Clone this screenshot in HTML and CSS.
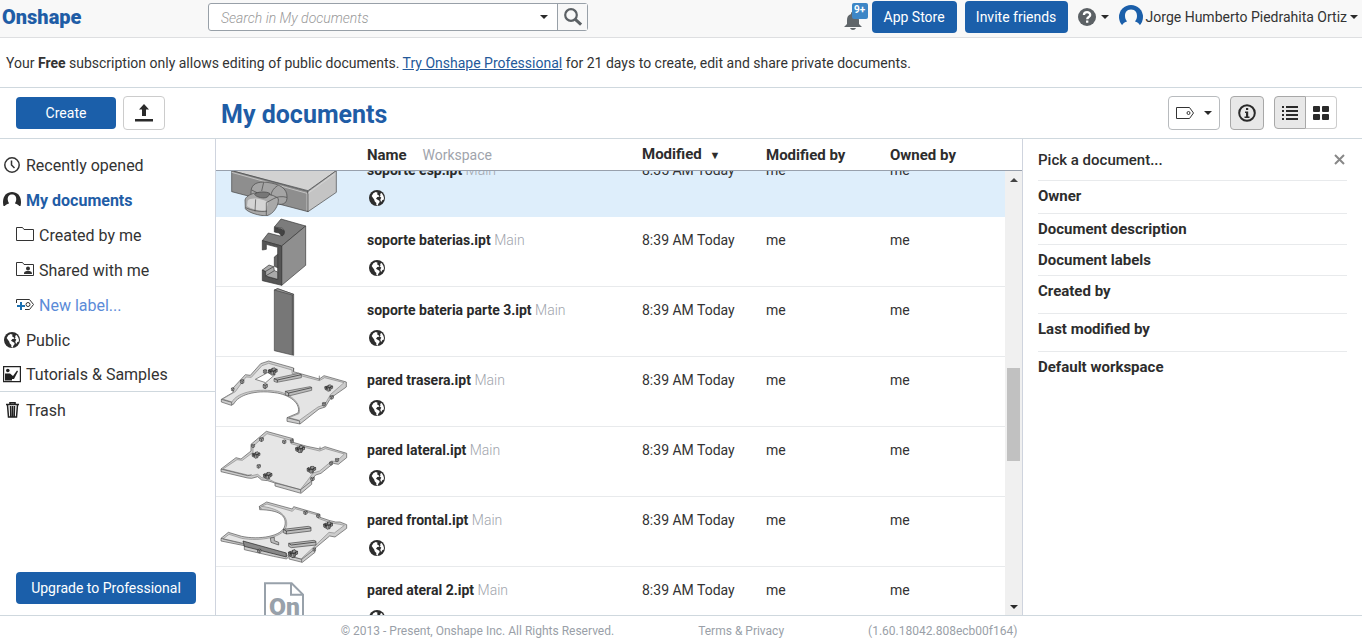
FILE: index.html
```html
<!DOCTYPE html>
<html lang="en">
<head>
<meta charset="utf-8">
<title>My documents - Onshape</title>
<link rel="stylesheet" href="styles.css">
</head>
<body>
<svg class="defs" aria-hidden="true">
  <symbol id="globe" viewBox="0 0 48 48">
    <circle cx="24" cy="24" r="24" fill="#2d2d2d"/>
    <path fill="#fff" d="M8 18l5-8 7-4 6 2-2 5 5 3 2 4-6 1-4 5 5 3 5 3 1 4-4 5-2 6-4-2v-6l-5-5-1-5zM33 12l5-3 5 8 2 7-1 5-4 1-2 5-3-1-1-6 3-5-5-4 3-3z"/>
  </symbol>
  <symbol id="cluster" viewBox="0 0 32 26">
    <path d="M2 9l6-3 3 3 3-6 8-2 3 4 5 1v8l-6 2-2 7-9 2-3-4-7-3z" fill="#999" stroke="#222" stroke-width="2"/>
    <path d="M2 9l9 3v8M11 9l8 3 11-6M14 3v6M19 12v10M8 6v12M24 6v10M4 14l20-3" fill="none" stroke="#222" stroke-width="2"/>
  </symbol>
  <symbol id="cube" viewBox="0 0 16 16">
    <path d="M2 4l6-3 6 2v8l-6 4-6-3zM2 4l6 2 6-3M8 6v9" fill="#aaa" stroke="#333" stroke-width="2"/>
  </symbol>
</svg>

<header class="topbar">
  <a class="logo" href="#">Onshape</a>
  <form class="search">
    <input class="search-input" type="text" placeholder="Search in My documents" aria-label="Search in My documents">
    <button class="search-scope" type="button" aria-label="Search scope"><span class="caret"></span></button>
    <button class="search-go" type="button" aria-label="Search">
      <svg width="20" height="20" viewBox="0 0 20 20" fill="none" stroke="#5c6165"><circle cx="8" cy="8" r="5.8" stroke-width="2.2"/><path d="M12.3 12.3l5.8 5.3" stroke-width="3"/></svg>
    </button>
  </form>
  <div class="account">
    <button class="bell" type="button" aria-label="Notifications">
      <svg width="18" height="19" viewBox="0 0 18 19"><path fill="#60666a" d="M8 1c2 0 2 1 2 2 3 1 5 3 5 6v4l3 3H0l3-3V9c0-3 1-5 4-6 0-1 0-2 1-2zM6 17h6c-1 2.500-5 2.500-6 0z"/></svg>
      <span class="badge">9+</span>
    </button>
    <button class="btn app-store" type="button">App Store</button>
    <button class="btn invite" type="button">Invite friends</button>
    <button class="help" type="button" aria-label="Help">
      <svg width="18" height="18" viewBox="0 0 18 18"><circle cx="9" cy="9" r="9" fill="#5c6165"/><path d="M5.900 7C6 3.200 12.200 3.200 12.200 6.900 12.200 9 9.200 9 9.200 11.200M9.200 12.500v2.200" fill="none" stroke="#fff" stroke-width="2.300"/></svg>
      <span class="caret"></span>
    </button>
    <button class="user" type="button">
      <svg width="24" height="24" viewBox="0 0 24 24"><circle cx="12" cy="12" r="12" fill="#1b5faa"/><path fill="#f8f8f8" d="M12 4.500c4.500 0 6 3 6 6.500 0 2.500-1 4-2 5.500 3 1 5 2.500 5.500 5.500V24h-19v-2c.5-3 2.500-4.500 5.500-5.500-1-1.500-2-3-2-5.500 0-3.500 1.500-6.500 6-6.500z"/></svg>
      <span>Jorge Humberto Piedrahita Ortiz</span>
      <span class="caret"></span>
    </button>
  </div>
</header>

<p class="banner">Your <b>Free</b> subscription only allows editing of public documents. <a href="#">Try Onshape Professional</a> for 21 days to create, edit and share private documents.</p>

<div class="toolbar">
  <div class="create-group">
    <button class="btn create" type="button">Create</button>
    <button class="tool upload" type="button" aria-label="Import">
      <svg width="18" height="18" viewBox="0 0 18 18" fill="#2a2a2a"><path d="M9 0l5 5.500h-3V12H7V5.500H4zM0 15h18v2.500H0z"/></svg>
    </button>
  </div>
  <h1>My documents</h1>
  <div class="view-tools">
    <button class="tool filter" type="button" aria-label="Filter by label">
      <svg width="18" height="12" viewBox="0 0 18 12" fill="none" stroke="#333"><path d="M.5.500h13l4 5.500-4 5.500H.5z"/><circle cx="12.500" cy="6" r="1.500"/></svg>
      <span class="caret"></span>
    </button>
    <button class="tool info pressed" type="button" aria-label="Details">
      <svg width="18" height="18" viewBox="0 0 18 18"><circle cx="9" cy="9" r="7.800" fill="none" stroke="#2a2a2a" stroke-width="2"/><path fill="#2a2a2a" d="M8 4h2.200v2H8zM7 7.500h3.200v5H11.500V14h-5v-1.500H8V9H7z"/></svg>
    </button>
    <div class="segmented">
      <button class="seg pressed" type="button" aria-label="List view">
        <svg width="16" height="14" viewBox="0 0 16 14" fill="#2a2a2a"><path d="M0 0h2v2H0zM0 4h2v2H0zM0 8h2v2H0zM0 12h2v2H0zM4 0h12v2H4zM4 4h12v2H4zM4 8h12v2H4zM4 12h12v2H4z"/></svg>
      </button>
      <button class="seg" type="button" aria-label="Grid view">
        <svg width="16" height="14" viewBox="0 0 16 14" fill="#2a2a2a"><rect width="7" height="6" rx="1"/><rect x="9" width="7" height="6" rx="1"/><rect y="8" width="7" height="6" rx="1"/><rect x="9" y="8" width="7" height="6" rx="1"/></svg>
      </button>
    </div>
  </div>
</div>

<div class="main">
  <nav class="sidebar">
    <a class="nav" href="#"><svg width="18" height="18" viewBox="0 0 18 18" fill="none" stroke="#333"><circle cx="9" cy="8" r="7.200" stroke-width="1.500"/><path d="M8.500 3.500V8l3 3" stroke-width="1.500"/></svg>Recently opened</a>
    <a class="nav current" href="#"><svg width="18" height="18" viewBox="0 0 18 18"><path fill="#2a2a2a" d="M.5 14C-1.500 5 3 0 9 0s10.500 5 8.500 14z"/><path fill="#fff" d="M9 2.500c3.500 0 4.500 2.500 4.200 5.500-.2 2-1.200 2.500-1.200 3.500 2 .5 4 1.500 5 3.500H1c1-2 3-3 5-3.500 0-1-1-1.500-1.200-3.500C4.500 5 5.500 2.500 9 2.500z"/></svg>My documents</a>
    <a class="nav sub" href="#"><svg width="18" height="18" viewBox="0 0 18 18" fill="none" stroke="#333"><path d="M.5 13.500v-13h6l1.500 2h9.500v11z"/></svg>Created by me</a>
    <a class="nav sub" href="#"><svg width="18" height="18" viewBox="0 0 18 18" fill="none" stroke="#333"><path d="M.5 13.500v-13h6l1.500 2h9.500v11z"/><path d="M8 12c0-3 2-3 4-3s4 0 4 3zM12 4.500a2 2 0 1 1 0 4 2 2 0 0 1 0-4z" fill="#333" stroke="none"/></svg>Shared with me</a>
    <a class="nav sub new" href="#"><svg width="18" height="18" viewBox="0 0 18 18" fill="none" stroke="#333"><path d="M.5 6V2.500h13l4 5-4 5H9"/><circle cx="12" cy="7.500" r="2"/><path d="M1 9h8M5 5v8" stroke="#1b6fb0" stroke-width="2"/></svg>New label...</a>
    <a class="nav" href="#"><svg width="18" height="18" viewBox="0 0 18 18"><use href="#globe" x="1" y="0" width="16" height="16"/></svg>Public</a>
    <a class="nav divided" href="#"><svg width="18" height="18" viewBox="0 0 18 18"><path d="M.6.600h16.800v15H.6z" fill="none" stroke="#222" stroke-width="1.200"/><circle cx="4.800" cy="4.500" r="1.800" fill="#222"/><path fill="#222" d="M2 14.500V7.500h5l3 2.500 4-5.500 1 .8L11 13H9v1.500z"/></svg>Tutorials &amp; Samples</a>
    <a class="nav" href="#"><svg width="18" height="18" viewBox="0 0 18 18" fill="none" stroke="#222"><path d="M3 2.500h13M7 2V.800h5V2" stroke-width="1.600"/><path d="M4.500 3l1 12h8l1-12M7.500 4l.3 11M9.500 4v11M11.500 4l-.3 11" stroke-width="1.500"/></svg>Trash</a>
    <button class="btn upgrade" type="button">Upgrade to Professional</button>
  </nav>

  <section class="documents">
    <table class="doc-table head">
      <colgroup><col class="c-thumb"><col class="c-name"><col class="c-mod"><col class="c-by"><col></colgroup>
      <thead><tr><th></th><th>Name <span class="muted workspace">Workspace</span></th><th>Modified <span class="sort">▼</span></th><th>Modified by</th><th>Owned by</th></tr></thead>
    </table>
    <div class="scroller">
      <div class="viewport">
        <table class="doc-table rows">
          <colgroup><col class="c-thumb"><col class="c-name"><col class="c-mod"><col class="c-by"><col></colgroup>
          <tbody>
          <tr class="selected">
            <td class="thumb"><svg width="135" height="69" viewBox="9 21 405 207" stroke="#444" stroke-width="2" stroke-linejoin="round">
              <path d="M50 92l70-60 244 60-85 60z" fill="#d2d2d2"/><path d="M50 92l229 62v61L50 155z" fill="#8e8e8e"/><path d="M279 154l85-62v65l-85 58z" fill="#c4c4c4"/><path d="M50 97l226 63v52M279 160l80-58" fill="none" stroke="#ddd"/>
              <path d="M108 156C108 130 130 124 156 127C196 132 216 146 216 170C217 188 206 196 188 192C182 200 176 206 168 211L108 190Z" fill="#a4a4a4"/>
              <path d="M90 180C92 170 104 164 116 160C138 154 178 164 190 176C192 196 176 222 156 227C134 229 96 216 91 206Z" fill="#a9a9a9"/>
              <path d="M98 182C104 170 150 176 158 188L154 212C136 214 104 206 96 198Z" fill="#d4d4d4" stroke="none"/>
              <path d="M119 163c6-9 36-9 45-3-1 8-8 14-18 14-14-1-24-5-27-11z" fill="#777"/>
              <path d="M110 150l16 8M146 127l-6 26M188 137c-14 8-20 22-20 30M216 172c-16-4-30-2-40 4M154 188c8-4 14-8 22-12M92 203c16 8 46 14 64 10M154 188v38M122 178l-2 36" fill="none"/>
            </svg></td>
            <td><b>soporte esp.ipt</b> <span class="muted">Main</span><svg class="globe"><use href="#globe"/></svg></td><td>8:35 AM Today</td><td>me</td><td>me</td>
          </tr>
          <tr>
            <td class="thumb"><svg width="135" height="69" viewBox="9 231 405 207" stroke="#333" stroke-width="2" stroke-linejoin="round">
              <path d="M178 261l20-24 74 21-72 60-58-16 18-23 35 9c15-8 15-22 4-24z" fill="#7c7c7c"/><path d="M200 318l72-60v118l-72 60z" fill="#8f8f8f"/><path d="M178 262l20 4c13 3 13 17 3 22l-10-9-13-3z" fill="#444"/>
              <path d="M142 302L200 318V436L142 422V390L152 394V408L188 418V322L154 313V328L142 330Z" fill="#555"/>
              <path d="M178 351l10-8v40l-10-4z" fill="#666"/>
              <path d="M142 390L162 375L176 380L178 392L188 396V418L152 408V394Z" fill="#aaa"/><path d="M152 394l24-14M152 408l26-16" fill="none"/>
            </svg></td>
            <td><b>soporte baterias.ipt</b> <span class="muted">Main</span><svg class="globe"><use href="#globe"/></svg></td><td>8:39 AM Today</td><td>me</td><td>me</td>
          </tr>
          <tr>
            <td class="thumb"><svg width="135" height="69" viewBox="9 6 405 207" stroke="#444" stroke-width="2">
              <path d="M178 15l10-4 48 17v183l-58-14z" fill="#777"/><path d="M178 15l10-4 48 17-4 2z" fill="#999"/><path d="M232 30v180" fill="none"/>
            </svg></td>
            <td><b>soporte bateria parte 3.ipt</b> <span class="muted">Main</span><svg class="globe"><use href="#globe"/></svg></td><td>8:39 AM Today</td><td>me</td><td>me</td>
          </tr>
          <tr>
            <td class="thumb"><svg width="135" height="69" viewBox="0 0 405 207" stroke="#555" stroke-width="2" stroke-linejoin="round">
              <path d="M10 127L46 106V92L82 53L97 55L128 20L152 12L227 33L226 44L304 66L318 56L385 75V90L345 118L335 128L322 150L303 156L246 201L207 193V182L240 168C250 140 215 112 170 107C110 98 60 115 48 140L40 145L10 135Z" fill="#ccc"/>
              <path d="M14 126L52 104L84 60L100 61L132 26L152 19L222 39V49L304 71L320 62L378 77L338 112L320 143L300 150L244 190L213 182L243 170C253 140 215 106 170 102C110 94 56 108 42 135Z" fill="#e4e4e4" stroke="#888"/>
              <path d="M10 127l31 9v9M207 182l38 10v9M227 33v11M304 56v14" fill="none"/>
              <path d="M112 67l42-23 18 8-29 25z" fill="#fff"/><path d="M168 65l74-16 8 4v9l-74 14-8-3zM202 103l74-14 5 2v9l-69 17-10-3z" fill="#bbb"/><path d="M168 65l10 4 72-16M202 103l10 5 69-16M178 69v7M212 108v9" fill="none" stroke="#222"/>
              <use href="#cluster" x="148" y="31" width="32" height="25"/><use href="#cluster" x="315" y="82" width="34" height="22"/><use href="#cube" x="65" y="66" width="15" height="16"/><use href="#cube" x="134" y="36" width="14" height="15"/><use href="#cube" x="133" y="75" width="17" height="25"/><use href="#cube" x="311" y="134" width="14" height="15"/><use href="#cube" x="334" y="114" width="14" height="14"/><use href="#cube" x="38" y="90" width="12" height="14"/>
            </svg></td>
            <td><b>pared trasera.ipt</b> <span class="muted">Main</span><svg class="globe"><use href="#globe"/></svg></td><td>8:39 AM Today</td><td>me</td><td>me</td>
          </tr>
          <tr>
            <td class="thumb"><svg width="135" height="69" viewBox="9 6 405 207" stroke="#555" stroke-width="2" stroke-linejoin="round">
              <path d="M18 132L63 98L78 102L108 78V58L154 19L234 41V52L265 61L276 64L315 72L330 65L395 85V98L370 118L355 115L318 145L302 150L290 165V178L258 205L180 183V174L158 167L140 165L128 155L110 160L98 159L18 140Z" fill="#ccc"/>
              <path d="M24 132L66 104L82 106L114 82V64L156 26L228 46V56L268 67L314 78L332 71L388 87L364 110L350 108L314 138L294 144L278 166L256 194L180 172L156 160L140 158L128 148L110 152L98 150Z" fill="#e6e6e6" stroke="#888"/>
              <path d="M18 132l80 20 12-3M180 174l77 20v9M257 194l33-26M234 41v12M315 65v8" fill="none"/>
              <use href="#cluster" x="106" y="79" width="34" height="22"/><use href="#cluster" x="239" y="60" width="32" height="25"/><use href="#cluster" x="272" y="122" width="34" height="24"/><use href="#cluster" x="142" y="140" width="32" height="24"/><use href="#cube" x="132" y="36" width="15" height="15"/><use href="#cube" x="201" y="43" width="14" height="15"/><use href="#cube" x="124" y="117" width="14" height="14"/><use href="#cube" x="108" y="56" width="13" height="13"/><use href="#cube" x="342" y="108" width="13" height="14"/><use href="#cube" x="359" y="98" width="14" height="14"/><use href="#cube" x="284" y="155" width="17" height="14"/><use href="#cube" x="224" y="42" width="12" height="13"/>
            </svg></td>
            <td><b>pared lateral.ipt</b> <span class="muted">Main</span><svg class="globe"><use href="#globe"/></svg></td><td>8:39 AM Today</td><td>me</td><td>me</td>
          </tr>
          <tr>
            <td class="thumb"><svg width="135" height="69" viewBox="9 216 405 207" stroke="#555" stroke-width="2" stroke-linejoin="round">
              <path d="M133 244L155 231L232 252L236 245L315 268V277L345 287L362 291L375 291L395 299V310L360 336L344 333L300 370V382L262 412L222 402V393L215 402L175 394L88 374V362L18 348V340L40 322L80 334C130 345 205 335 210 300C215 270 190 255 134 254Z" fill="#ccc"/>
              <path d="M139 244L156 237L232 259L240 251L310 271V280L345 293L374 298L388 301L358 324L342 322L294 368L258 402L222 392L88 358L24 342L42 328L80 340C135 350 210 338 215 300C218 268 185 249 139 244Z" fill="#e6e6e6" stroke="#888"/>
              <path d="M84 348l130 36v12l-126-32z" fill="#888" stroke="#222"/>
              <path d="M18 340l66 15M133 244l6 8M223 393l37 10v9M260 403l41-32" fill="none"/>
              <path d="M205 313l75-9 8 3v11l-74 9-9-4zM221 355l76-9 6 3v11l-74 8-8-4zM166 339l12-2v10l13 5v8l-23-8z" fill="#bbb" stroke="#444"/><path d="M205 313l9 5 74-9M221 355l8 5 74-9M214 318v9" fill="none" stroke="#222"/>
              <use href="#cluster" x="322" y="289" width="34" height="25"/><use href="#cluster" x="218" y="372" width="32" height="28"/><use href="#cube" x="264" y="256" width="15" height="14"/><use href="#cube" x="126" y="370" width="14" height="16"/><use href="#cube" x="303" y="265" width="13" height="16"/><use href="#cube" x="292" y="366" width="12" height="15"/>
            </svg></td>
            <td><b>pared frontal.ipt</b> <span class="muted">Main</span><svg class="globe"><use href="#globe"/></svg></td><td>8:39 AM Today</td><td>me</td><td>me</td>
          </tr>
          <tr>
            <td class="thumb"><svg width="135" height="69" viewBox="9 426 405 207" fill="none" stroke="#98a1aa" stroke-width="6"><path d="M150 630V475h80l34 34v120M228 475v34h36"/><text class="doc-mark" x="162" y="570">On</text></svg></td>
            <td><b>pared ateral 2.ipt</b> <span class="muted">Main</span><svg class="globe"><use href="#globe"/></svg></td><td>8:39 AM Today</td><td>me</td><td>me</td>
          </tr>
          </tbody>
        </table>
      </div>
      <div class="scrollbar" aria-hidden="true"><span class="caret up"></span><span class="space-above"></span><span class="handle"></span><span class="space-below"></span><span class="caret"></span></div>
    </div>
  </section>

  <aside class="details">
    <div class="detail title"><h2>Pick a document...</h2><button class="close" type="button" aria-label="Close"><svg width="13" height="11" viewBox="0 0 13 11"><path d="M1 1l9 9M10 1l-9 9" stroke="#888" stroke-width="2"/></svg></button></div>
    <div class="detail owner">Owner</div>
    <div class="detail">Document description</div>
    <div class="detail">Document labels</div>
    <div class="detail tall">Created by</div>
    <div class="detail tall">Last modified by</div>
    <div class="detail last">Default workspace</div>
  </aside>
</div>

<footer class="footer">
  <span>© 2013 - Present, Onshape Inc. All Rights Reserved.</span>
  <a href="#">Terms &amp; Privacy</a>
  <span>(1.60.18042.808ecb00f164)</span>
</footer>
</body>
</html>
```
FILE: styles.css
```css
* { box-sizing: border-box; }
body {
  margin: 0;
  height: 100vh;
  display: flex;
  flex-direction: column;
  overflow: hidden;
  background: #fff;
  color: #333;
  font: 14px/20px Roboto, "Liberation Sans", sans-serif;
}
button, input { font: inherit; color: inherit; }
button { padding: 0; border: 0; background: none; cursor: pointer; }
a { color: inherit; text-decoration: none; }
svg { display: block; flex: none; }
.defs { position: absolute; width: 0; height: 0; }
.caret {
  flex: none;
  width: 0;
  height: 0;
  border: 4px solid transparent;
  border-top-color: #2a2a2a;
  border-bottom: 0;
}
.caret.up { border-top: 0; border-bottom: 4px solid #444; }

.btn {
  height: 32px;
  border-radius: 4px;
  background: #1b5faa;
  color: #fff;
}

.topbar {
  flex: none;
  display: flex;
  align-items: center;
  height: 38px;
  border-bottom: 1px solid #dedfe1;
  background: #f8f8f8;
}
.logo {
  width: 208px;
  padding: 0 0 3px 2px;
  color: #1f5da6;
  font-size: 20px;
  font-weight: 900;
}
.search {
  display: flex;
  width: 380px;
  height: 28px;
  margin-bottom: 4px;
  border: 1px solid #98a0a8;
  border-radius: 3px;
  background: #fff;
}
.search-input {
  flex: 1;
  min-width: 0;
  padding: 2px 12px 0;
  border: 0;
  background: none;
  outline: 0;
}
.search-input::placeholder { color: #999; font-style: italic; font-weight: 300; }
.search-scope { width: 26px; display: flex; align-items: center; justify-content: center; }
.search-go {
  width: 30px;
  display: flex;
  align-items: center;
  justify-content: center;
  border-left: 1px solid #98a0a8;
  background: #f8f8f8;
}
.account {
  display: flex;
  align-items: center;
  margin-left: auto;
  padding: 0 4px 4px 0;
}
.bell { position: relative; width: 24px; height: 28px; margin-right: 4px; padding: 7px 0 0; }
.badge {
  position: absolute;
  top: 0;
  right: 0;
  width: 16px;
  height: 16px;
  border-radius: 2px;
  background: #3d86c6;
  color: #fff;
  font-size: 10px;
  font-weight: 700;
  line-height: 14px;
}
.app-store { width: 85px; margin-right: 8px; }
.invite { width: 103px; margin-right: 10px; }
.help { display: flex; align-items: center; gap: 5px; margin-right: 10px; }
.user { display: flex; align-items: center; gap: 3px; }

.banner {
  flex: none;
  margin: 0;
  padding: 15px 6px 14px;
  border-bottom: 1px solid #cfd8de;
}
.banner a { color: #24599a; text-decoration: underline; }

.toolbar {
  flex: none;
  display: flex;
  align-items: center;
  height: 51px;
  padding-right: 25px;
  border-bottom: 1px solid #cfd8de;
}
.create-group {
  display: flex;
  align-items: center;
  gap: 7px;
  width: 221px;
  padding-left: 16px;
}
.create { width: 100px; }
.tool {
  display: flex;
  align-items: center;
  justify-content: center;
  height: 34px;
  border: 1px solid #b8bbbe;
  border-radius: 4px;
  background: #fff;
}
.upload { width: 42px; border-color: #ccc; }
h1 { margin: 0; padding-top: 3px; color: #1f5da6; font-size: 25px; line-height: 32px; }
.view-tools { display: flex; gap: 10px; margin-left: auto; }
.filter { width: 52px; gap: 10px; }
.info { width: 34px; }
.tool.pressed, .seg.pressed { background: #e8e8e8; border-color: #a8a8a8; }
.segmented { display: flex; }
.seg {
  display: flex;
  align-items: center;
  justify-content: center;
  width: 31px;
  height: 33px;
  border: 1px solid #ccc;
  border-radius: 0 4px 4px 0;
}
.seg.pressed { width: 32px; border-radius: 4px 0 0 4px; }
.seg + .seg { border-left: 0; }

.main { flex: 1; min-height: 0; display: flex; }

.sidebar {
  flex: none;
  display: flex;
  flex-direction: column;
  width: 216px;
  padding: 9px 0 11px;
  border-right: 1px solid #cfd4de;
  font-size: 16px;
}
.nav { display: flex; align-items: center; gap: 5px; height: 35px; padding-left: 3px; }
.nav.current { color: #1f5da6; font-weight: 700; }
.nav.sub { padding-left: 16px; }
.nav.new { color: #5b8bd8; }
.nav.divided { height: 34px; border-bottom: 1px solid #cfd8de; }
.nav.divided + .nav { height: 38px; }
.upgrade { width: 180px; margin: auto 0 0 16px; font-size: 14px; }

.documents { flex: 1; min-width: 0; display: flex; flex-direction: column; }
.doc-table { width: 100%; border-collapse: separate; border-spacing: 0; table-layout: fixed; }
.c-thumb { width: 151px; }
.c-name { width: 275px; }
.c-mod, .c-by { width: 124px; }
th, td { padding: 0; text-align: left; }
.head { flex: none; border-bottom: 1px solid #98a0ac; font-size: 15px; }
.head th { height: 31px; color: #2d2d2d; }
.muted { color: #a0a4ac; font-weight: 300; }
.workspace { margin-left: 12px; font-size: 14px; font-weight: 400; }
.sort { margin-left: 4px; font-size: 11px; }
.scroller { flex: 1; min-height: 0; display: flex; }
.viewport { flex: 1; min-width: 0; overflow: hidden; }
.rows { margin-top: -24px; }
.rows td {
  height: 70px;
  padding-top: 13px;
  border-bottom: 1px solid #e8eaec;
  vertical-align: top;
}
.rows b { color: #2a2a2a; }
.rows .thumb { padding: 0 0 0 2px; }
.rows .selected td { background: #deeefb; border-color: #deeefb; }
.globe { width: 16px; height: 16px; margin: 10px 0 0 2px; }
.doc-mark { fill: #98a1aa; stroke: none; font-size: 74px; font-weight: 900; }
.scrollbar {
  flex: none;
  display: flex;
  flex-direction: column;
  align-items: center;
  width: 17px;
  padding: 7px 0 6px;
  background: #f0f0f0;
}
.space-above { flex: 186; }
.handle { flex: 93; width: 13px; background: #c1c1c1; }
.space-below { flex: 144; }

.details {
  flex: none;
  width: 340px;
  padding: 0 15px;
  border-left: 1px solid #cfd4de;
  color: #2d2d2d;
  font-size: 15px;
  font-weight: 700;
}
.detail { padding: 5px 0; border-bottom: 1px solid #e8eaec; }
.detail.title { display: flex; justify-content: space-between; align-items: center; height: 42px; }
.detail h2 { margin: 0; font-size: 15px; font-weight: 500; }
.detail.owner { padding-bottom: 7px; }
.detail.tall { padding-bottom: 12px; }
.detail.last { border-bottom: 0; }

.footer {
  flex: none;
  display: flex;
  justify-content: center;
  gap: 84px;
  height: 27px;
  padding: 5px 4px 0 0;
  border-top: 1px solid #cfd8de;
  color: #9a9fa8;
  font-size: 12px;
}
```
